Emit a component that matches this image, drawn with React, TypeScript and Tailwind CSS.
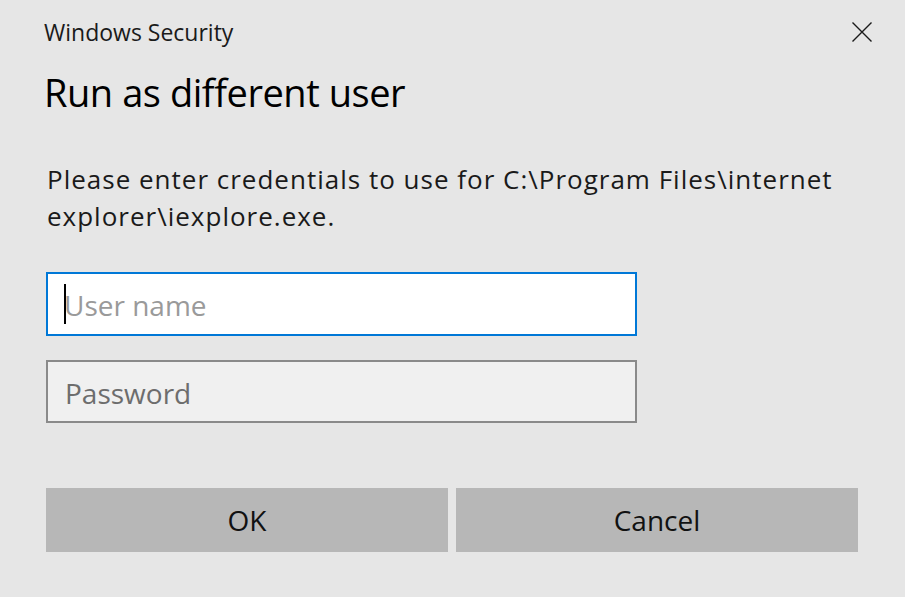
import React from "react";

export default function App() {
  const font = { fontFamily: '"Open Sans", "Noto Sans", Arial, sans-serif' };
  return (
    <div
      className="w-[905px] h-[597px] bg-[#e6e6e6] text-[#000] overflow-hidden"
      style={font}
    >
      <div className="h-[64px] flex items-center justify-between pl-[44px] pr-[33px]">
        <span className="text-[23px] leading-[28px] text-[#1a1a1a]">Windows Security</span>
        <svg width="20" height="20" viewBox="0 0 20 20" className="block">
          <path d="M0.5 0.5 L19.5 19.5 M19.5 0.5 L0.5 19.5" stroke="#1a1a1a" strokeWidth="1.4" fill="none" />
        </svg>
      </div>
      <div className="mt-[6px] pl-[44px] text-[38px] leading-[44px] tracking-[-0.45px] text-[#000]">
        Run as different user
      </div>
      <div className="mt-[47px] pl-[47px] text-[26px] leading-[37px] tracking-[1px] text-[#1a1a1a] w-[880px]">
        Please enter credentials to use for C:\Program Files\internet
        <br />
        explorer\iexplore.exe.
      </div>
      <div className="mt-[37px] ml-[46px] w-[591px] flex flex-col gap-[24px]">
        <div className="h-[64px] bg-white border-2 border-[#0078d7] flex items-center pl-[16px] pt-[2px] text-[28px] text-[#9a9a9a]">
          <span className="w-[2px] h-[40px] bg-black mr-[-2px] -mt-[2px]"></span>
          <span>User name</span>
        </div>
        <div className="h-[63px] bg-[#f0f0f0] border-2 border-[#8a8a8a] flex items-center pl-[17px] pt-[3px] text-[28px] text-[#6d6d6d]">
          Password
        </div>
      </div>
      <div className="mt-[65px] ml-[46px] flex gap-[8px]">
        <div className="w-[402px] h-[64px] bg-[#b7b7b7] flex items-center justify-center text-[28px] text-[#111]">OK</div>
        <div className="w-[402px] h-[64px] bg-[#b7b7b7] flex items-center justify-center text-[28px] text-[#111]">Cancel</div>
      </div>
    </div>
  );
}
